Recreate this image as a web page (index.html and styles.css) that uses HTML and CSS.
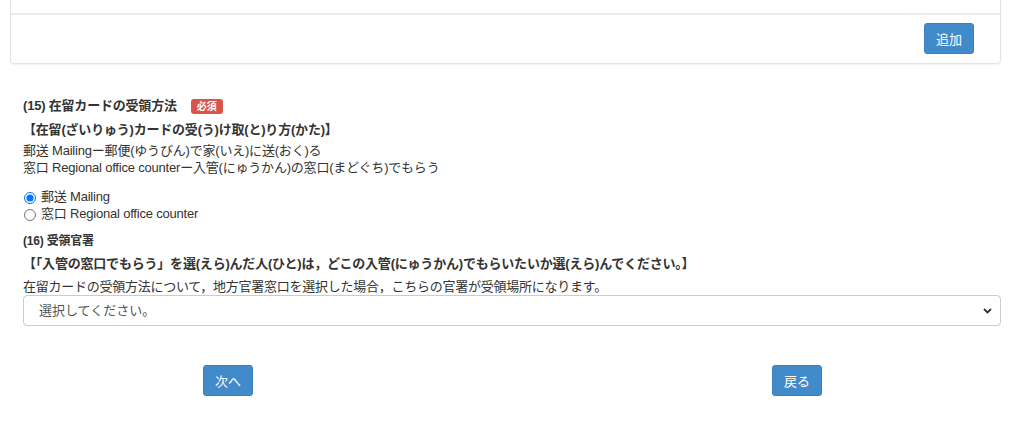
FILE: index.html
```html
<!DOCTYPE html>
<html lang="ja">
<head>
	<meta charset="UTF-8">
	<title>在留カード申請</title>
	<link rel="stylesheet" href="styles.css">
</head>
<body>
	<div class="panel">
		<div class="panel-body"></div>
		<div class="panel-footer">
			<a href="javascript:;" class="btn">追加</a>
		</div>
	</div>

	<div class="form">
		<div class="item">
			<div class="item-title">(15) 在留カードの受領方法<span class="badge">必須</span></div>
			<div class="item-note">【在留(ざいりゅう)カードの受(う)け取(と)り方(かた)】</div>
			<div class="item-text">
				<p>郵送 Mailingー郵便(ゆうびん)で家(いえ)に送(おく)る</p>
				<p>窓口 Regional office counterー入管(にゅうかん)の窓口(まどぐち)でもらう</p>
			</div>
			<div class="radios">
				<label><input type="radio" name="receive" checked> 郵送 Mailing</label>
				<label><input type="radio" name="receive"> 窓口 Regional office counter</label>
			</div>
		</div>

		<div class="item">
			<div class="item-title small">(16) 受領官署</div>
			<div class="item-note">【「入管の窓口でもらう」を選(えら)んだ人(ひと)は，どこの入管(にゅうかん)でもらいたいか選(えら)んでください。】</div>
			<div class="item-desc">在留カードの受領方法について，地方官署窓口を選択した場合，こちらの官署が受領場所になります。</div>
			<div class="select-wrap">
				<select class="select">
					<option>選択してください。</option>
				</select>
				<svg class="chevron" width="9" height="6" viewBox="0 0 9 6"><path d="M1 1l3.5 3.5L8 1" fill="none" stroke="#333" stroke-width="1.8"/></svg>
			</div>
		</div>
	</div>

	<div class="actions">
		<a href="javascript:;" class="btn">次へ</a>
		<a href="javascript:;" class="btn">戻る</a>
	</div>
</body>
</html>
```

FILE: styles.css
```css
*{
	margin: 0;
	padding: 0;
	box-sizing: border-box;
	text-decoration: none;
}
body{
	font-family: "Liberation Sans", "Noto Sans CJK JP", sans-serif;
	font-size: 13px;
	color: #333;
	background: #fff;
}
.panel{
	margin: 0 23px 0 10px;
	border: 1px solid #e3e3e3;
	border-top: none;
	border-radius: 0 0 4px 4px;
	box-shadow: 0 1px 2px rgba(0,0,0,.06);
}
.panel-body{
	height: 15px;
	border-bottom: 2px solid #ebebeb;
}
.panel-footer{
	display: flex;
	justify-content: flex-end;
	padding: 8px 26px 9px;
}
.btn{
	display: inline-block;
	height: 31px;
	line-height: 31px;
	padding: 0 11px;
	background: #428bca;
	border: 1px solid #3c80bd;
	border-radius: 3px;
	color: #fff;
	font-size: 13px;
}
.form{
	padding: 32px 23px 0 23px;
	letter-spacing: -0.2px;
}
.item-title{
	font-weight: bold;
	line-height: 20px;
	display: flex;
	align-items: center;
}
.item-title.small{
	font-size: 12px;
}
.badge{
	display: inline-block;
	margin-left: 14px;
	padding: 0 6px;
	height: 15px;
	line-height: 15px;
	background: #d9534f;
	color: #fff;
	font-size: 10px;
	border-radius: 3px;
	letter-spacing: 0;
}
.item-note{
	font-weight: bold;
	line-height: 20px;
	margin-top: 4px;
}
.small + .item-note{
	margin-top: 3px;
}
.item-text{
	margin-top: 2px;
	line-height: 17px;
}
.radios{
	margin-top: 12px;
	display: flex;
	flex-direction: column;
}
.radios label{
	display: flex;
	align-items: center;
	line-height: 17px;
	gap: 5px;
}
.radios input{
	width: 12px;
	height: 12px;
	margin: 2px 0 0 1px;
}
.item + .item{
	margin-top: 9px;
}
.item-desc{
	margin: 4px 0 -1px;
	line-height: 18px;
	font-size: 13px;
	letter-spacing: -0.25px;
}
.select-wrap{
	position: relative;
}
.select{
	width: 100%;
	height: 31px;
	padding: 0 15px;
	border: 1px solid #ccc;
	border-radius: 4px;
	background: #fff;
	color: #555;
	font-family: inherit;
	font-size: 13px;
	appearance: none;
	-webkit-appearance: none;
}
.chevron{
	position: absolute;
	right: 9px;
	top: 13px;
}
.actions{
	display: flex;
	justify-content: space-between;
	padding: 39px 202px 0 203px;
}
```
